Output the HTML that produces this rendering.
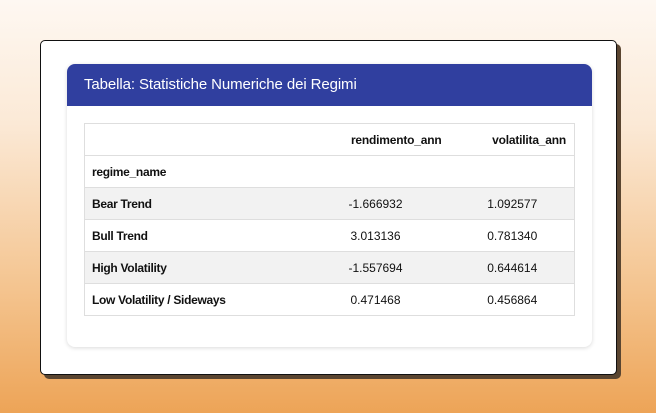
<!DOCTYPE html>
<html><head><style>
*{margin:0;padding:0;box-sizing:border-box}
body{width:656px;height:413px;overflow:hidden;background:linear-gradient(180deg,#fef8f2 0%,#fbe9d6 30%,#f4c48f 70%,#eda457 100%);font-family:"Segoe UI","Liberation Sans",sans-serif;position:relative}
.win{position:absolute;left:40px;top:40px;width:577px;height:335px;background:#fff;border:1px solid #111;border-radius:5px;box-shadow:4px 4px 0 #5a4530}
.card{position:absolute;left:26px;top:23px;width:525px;height:283px;background:#fff;border-radius:8px;box-shadow:0 1px 4px rgba(0,0,0,.15);overflow:hidden}
.hd{height:42px;background:#303f9f;color:#fff;font-size:15px;padding:12px 0 0 17px;letter-spacing:-0.1px}
table{position:absolute;left:17px;top:59px;width:491px;border-collapse:collapse;font-size:12px;color:#111}
td{height:32px;border:1px solid #dedede;border-left:none;border-right:none;padding:0}
tr td:first-child{border-left:1px solid #dedede;padding-left:7px;font-weight:bold;width:216px;letter-spacing:-0.3px}
tr td:last-child{border-right:1px solid #dedede}
td.c2{width:150px;text-align:center}
td.c3{text-align:center}
tr.h td{font-weight:bold;letter-spacing:-0.2px}
tr.h td.c2{text-align:right;padding-right:9px}
tr.h td.c3{text-align:right;padding-right:8px}
tr.g td{background:#f2f2f2}
</style></head><body>
<div class="win"><div class="card">
<div class="hd">Tabella: Statistiche Numeriche dei Regimi</div>
<table>
<tr class="h"><td></td><td class="c2">rendimento_ann</td><td class="c3">volatilita_ann</td></tr>
<tr><td>regime_name</td><td class="c2"></td><td class="c3"></td></tr>
<tr class="g"><td>Bear Trend</td><td class="c2">-1.666932</td><td class="c3">1.092577</td></tr>
<tr><td>Bull Trend</td><td class="c2">3.013136</td><td class="c3">0.781340</td></tr>
<tr class="g"><td>High Volatility</td><td class="c2">-1.557694</td><td class="c3">0.644614</td></tr>
<tr><td>Low Volatility / Sideways</td><td class="c2">0.471468</td><td class="c3">0.456864</td></tr>
</table>
</div></div>
</body></html>
